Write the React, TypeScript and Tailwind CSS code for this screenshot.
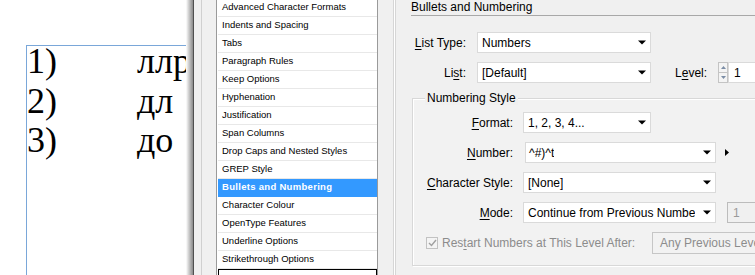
import React from 'react';

const sections = [
  'Advanced Character Formats',
  'Indents and Spacing',
  'Tabs',
  'Paragraph Rules',
  'Keep Options',
  'Hyphenation',
  'Justification',
  'Span Columns',
  'Drop Caps and Nested Styles',
  'GREP Style',
  'Bullets and Numbering',
  'Character Colour',
  'OpenType Features',
  'Underline Options',
  'Strikethrough Options',
];

const lines = [
  ['1)', 'ллр'],
  ['2)', 'дл'],
  ['3)', 'до'],
];

const DownArrow = ({ gray }: { gray?: boolean }) => (
  <svg width="8" height="5" viewBox="0 0 8 5" className="shrink-0">
    <polygon points="0,0.5 8,0.5 4,4.5" fill={gray ? '#9a9a9a' : '#000'} />
  </svg>
);

const Select = ({ value, className, textClass = 'pl-[4px]' }: { value: string; className: string; textClass?: string }) => (
  <div className={`h-[21px] flex items-center justify-between bg-white border border-[#dadada] pr-[4px] ${className}`}>
    <span className={`whitespace-nowrap overflow-hidden ${textClass}`}>{value}</span>
    <DownArrow />
  </div>
);

const Label = ({ pre = '', u, post, className }: { pre?: string; u: string; post: string; className: string }) => (
  <div className={`text-right whitespace-nowrap shrink-0 ${className}`}>
    {pre}
    <span className="underline underline-offset-2">{u}</span>
    {post}
  </div>
);

export default function App() {
  return (
    <div className="w-[755px] h-[275px] flex overflow-hidden bg-white font-['Liberation_Sans',Arial,sans-serif] text-black">
      {/* document canvas */}
      <div className="w-[186px] shrink-0 overflow-hidden bg-white">
        <div className="mt-[45px] ml-[26px] h-[260px] border-l border-t border-[#7aa7d9]">
          <div className="-mt-[4px] font-['Liberation_Serif',serif] text-[36px] leading-[39.5px] whitespace-nowrap">
            {lines.map(([n, t]) => (
              <div key={n} className="flex">
                <span className="w-[110px] shrink-0">{n}</span>
                <span>{t}</span>
              </div>
            ))}
          </div>
        </div>
      </div>

      {/* dialog shadow */}
      <div className="w-[7px] shrink-0 bg-gradient-to-r from-white to-[#8a8a8a]" />
      <div className="w-px shrink-0 bg-[#505050]" />

      {/* dialog */}
      <div className="flex-1 flex bg-[#f0f0f0] min-w-0">
        <div className="w-[7px] shrink-0" />
        <div className="w-[15px] shrink-0 border-l border-[#d0d0d0]" />

        {/* section list */}
        <div className="w-[162px] shrink-0 bg-white border-x border-[#9a9a9a] overflow-hidden">
          <div className="-mt-px ml-px text-[9.5px]">
            {sections.map((s) => {
              const on = s === 'Bullets and Numbering';
              return (
                <div
                  key={s}
                  className={`h-[18px] flex items-center pl-[4px] whitespace-nowrap border-b ${
                    on ? 'bg-[#3399ff] text-white font-bold tracking-[0.3px] border-[#3399ff]' : 'border-[#e8e8e8]'
                  }`}
                >
                  {s}
                </div>
              );
            })}
            <div className="h-[20px] border border-black" />
          </div>
        </div>

        <div className="w-[15px] shrink-0" />
        <div className="w-[3px] shrink-0 bg-white border-x border-[#d6d6d6]" />

        {/* settings panel */}
        <div className="flex-1 min-w-0 overflow-hidden pl-[15px] text-[12px] leading-[14px]">
          <div className="w-[400px] h-[16px] border-b border-[#a8a8a8] whitespace-nowrap">Bullets and Numbering</div>

          <div className="w-[420px] mt-[16px] flex flex-col gap-[9px]">
            <div className="h-[21px] flex items-center">
              <Label u="L" post="ist Type:" className="w-[55px] mr-[11px]" />
              <Select value="Numbers" className="w-[174px]" />
            </div>
            <div className="h-[21px] flex items-center">
              <Label pre="Li" u="s" post="t:" className="w-[55px] mr-[11px]" />
              <Select value="[Default]" className="w-[174px]" />
              <Label pre="L" u="e" post="vel:" className="ml-[24px] w-[30px] mr-[13px]" />
              <div className="w-[10px] h-[21px] flex flex-col shrink-0">
                <div className="flex-1 flex items-center justify-center border border-[#c4c4c4] bg-[#f4f4f4]">
                  <svg width="5" height="3" viewBox="0 0 5 3"><polygon points="0,3 5,3 2.5,0" fill="#7b8da6" /></svg>
                </div>
                <div className="flex-1 flex items-center justify-center border border-t-0 border-[#c4c4c4] bg-[#f4f4f4]">
                  <svg width="5" height="3" viewBox="0 0 5 3"><polygon points="0,0 5,0 2.5,3" fill="#7b8da6" /></svg>
                </div>
              </div>
              <div className="w-[60px] h-[21px] flex items-center bg-white border border-[#dadada] pl-[5px]">1</div>
            </div>
          </div>

          {/* numbering style group */}
          <div className="w-[420px] ml-px mt-[15px] h-[168px] border border-[#d8d8d8] shadow-[inset_1px_1px_0_#ffffff,1px_1px_0_#ffffff] bg-[#f2f2f2] relative">
            <div className="absolute -top-[8px] left-[12px] px-[2px] bg-[#f0f0f0] whitespace-nowrap">Numbering Style</div>
            <div className="mt-[13px] flex flex-col gap-[9px]">
              <div className="h-[21px] flex items-center">
                <Label u="F" post="ormat:" className="w-[100px] mr-[10px]" />
                <Select value="1, 2, 3, 4..." className="w-[128px]" />
              </div>
              <div className="h-[21px] flex items-center">
                <Label u="N" post="umber:" className="w-[100px] mr-[12px]" />
                <Select value="^#)^t" className="w-[191px]" textClass="pl-[3px]" />
                <svg width="5" height="7" viewBox="0 0 5 7" className="ml-[9px]">
                  <polygon points="0,0 4,3.5 0,7" fill="#000" />
                </svg>
              </div>
              <div className="h-[21px] flex items-center">
                <Label u="C" post="haracter Style:" className="w-[100px] mr-[10px]" />
                <Select value="[None]" className="w-[193px]" textClass="pl-[4px]" />
              </div>
              <div className="h-[21px] flex items-center">
                <Label u="M" post="ode:" className="w-[100px] mr-[10px]" />
                <Select value="Continue from Previous Numbe" className="w-[193px]" textClass="pl-[4px]" />
                <div className="ml-[11px] w-[60px] h-[21px] flex items-center border border-[#bcbcbc] bg-[#f0f0f0] pl-[5px] text-[#9a9a9a]">1</div>
              </div>
              <div className="h-[21px] flex items-center">
                <div className="ml-[13px] w-[12px] h-[12px] shrink-0 border border-[#c2c2c2] bg-[#f4f4f4] flex items-center justify-center">
                  <svg width="9" height="8" viewBox="0 0 9 8">
                    <polyline points="1,4 3.5,6.5 8,1" fill="none" stroke="#a0a0a0" strokeWidth="1.4" />
                  </svg>
                </div>
                <div className="ml-[4px] w-[206px] shrink-0 whitespace-nowrap text-[#8c8c8c]">
                  Res<span className="underline underline-offset-2">t</span>art Numbers at This Level After:
                </div>
                <div className="ml-[4px] w-[150px] h-[22px] flex items-center border border-[#c6c6c6] bg-[#f2f2f2] pl-[7px] text-[#8c8c8c] whitespace-nowrap">
                  Any Previous Level
                </div>
              </div>
            </div>
          </div>
        </div>
      </div>
    </div>
  );
}
